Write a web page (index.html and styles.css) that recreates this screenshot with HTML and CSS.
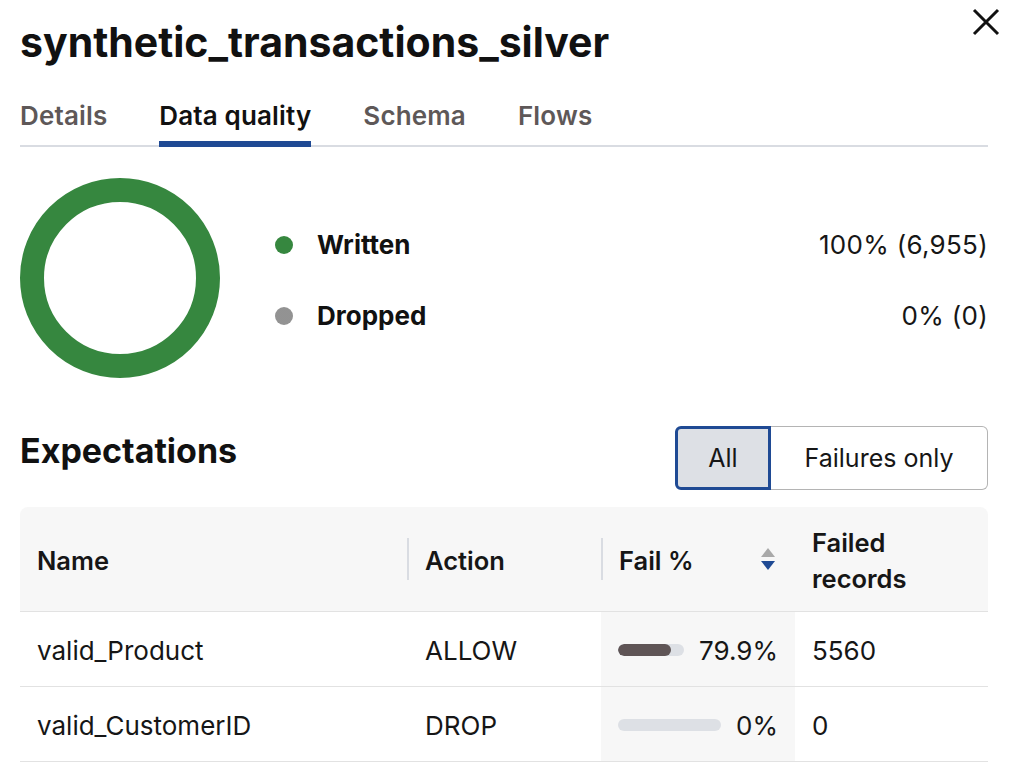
FILE: index.html
```html
<!DOCTYPE html>
<html lang="en">
<head>
<meta charset="utf-8">
<title>synthetic_transactions_silver</title>
<link rel="stylesheet" href="styles.css">
</head>
<body>
<div class="panel">
  <header class="panel-head">
    <h1 class="title">synthetic_transactions_silver</h1>
    <button class="close" aria-label="Close">
      <svg width="28" height="28" viewBox="0 0 28 28"><path d="M2 2 L26 26 M26 2 L2 26" stroke="#111" stroke-width="3" fill="none"/></svg>
    </button>
  </header>
  <nav class="tabs">
    <a class="tab">Details</a>
    <a class="tab active">Data quality</a>
    <a class="tab">Schema</a>
    <a class="tab">Flows</a>
  </nav>
  <section class="summary">
    <svg class="donut" width="200" height="200" viewBox="0 0 200 200">
      <circle cx="100" cy="100" r="88" fill="none" stroke="#36873f" stroke-width="24"/>
    </svg>
    <ul class="legend">
      <li class="legend-row"><span class="dot dot-written"></span><span class="legend-label">Written</span><span class="legend-value">100% (6,955)</span></li>
      <li class="legend-row"><span class="dot dot-dropped"></span><span class="legend-label">Dropped</span><span class="legend-value">0% (0)</span></li>
    </ul>
  </section>
  <section class="exp-head">
    <h2 class="exp-title">Expectations</h2>
    <div class="toggle">
      <button class="toggle-btn selected">All</button>
      <button class="toggle-btn">Failures only</button>
    </div>
  </section>
  <table class="exp-table">
    <colgroup><col class="c-name"><col class="c-action"><col class="c-fail"><col class="c-records"></colgroup>
    <thead>
      <tr>
        <th class="th-name">Name</th>
        <th class="th-div"><div class="th-inner">Action</div></th>
        <th class="th-div th-fail"><div class="th-inner"><span>Fail %</span>
          <svg class="sort" width="16" height="26" viewBox="0 0 16 26"><path d="M8 2 L15 11 L1 11 Z" fill="#a9a9a9"/><path d="M1 15 L15 15 L8 24 Z" fill="#1f4a94"/></svg></div></th>
        <th class="th-records">Failed<br>records</th>
      </tr>
    </thead>
    <tbody>
      <tr>
        <td>valid_Product</td>
        <td class="td-action">ALLOW</td>
        <td class="td-fail"><div class="fail"><div class="track"><div class="fill" style="width:79.9%"></div></div><span class="fail-val">79.9%</span></div></td>
        <td>5560</td>
      </tr>
      <tr>
        <td>valid_CustomerID</td>
        <td class="td-action">DROP</td>
        <td class="td-fail"><div class="fail"><div class="track"><div class="fill" style="width:0%"></div></div><span class="fail-val">0%</span></div></td>
        <td>0</td>
      </tr>
    </tbody>
  </table>
</div>
</body>
</html>
```
FILE: styles.css
```css
* { box-sizing: border-box; }
html, body { margin: 0; padding: 0; background: #fff; }
body {
  font-family: Inter, "Noto Sans", sans-serif;
  color: #161616;
  -webkit-font-smoothing: antialiased;
}
.panel { padding: 0 25px 0 20px; }
.panel-head {
  display: flex;
  justify-content: space-between;
  align-items: flex-start;
}
.title {
  margin: 19px 0 0;
  font-size: 41px;
  line-height: 46px;
  font-weight: 700;
  letter-spacing: 0;
  color: #111;
}
.close {
  margin: 8px -12px 0 0;
  padding: 0;
  border: 0;
  background: none;
  width: 28px;
  height: 28px;
}
.close svg { display: block; }
.tabs {
  display: flex;
  gap: 52px;
  margin-top: 35px;
  box-shadow: inset 0 -2px 0 #d9dce2;
}
.tab {
  font-size: 26px;
  line-height: 32px;
  font-weight: 600;
  letter-spacing: 0.15px;
  color: #5e5858;
  padding-bottom: 9px;
  border-bottom: 6px solid transparent;
}
.tab.active { color: #111; border-bottom-color: #1f4a94; }
.summary {
  display: flex;
  align-items: center;
  margin-top: 31px;
}
.donut { display: block; flex: none; }
.legend {
  list-style: none;
  margin: 4px 0 0 55px;
  padding: 0;
  flex: 1;
  display: flex;
  flex-direction: column;
  gap: 39px;
}
.legend-row {
  display: flex;
  align-items: center;
  height: 32px;
  font-size: 26px;
}
.dot {
  width: 18px;
  height: 18px;
  border-radius: 50%;
  flex: none;
  margin-right: 24px;
}
.dot-written { background: #36873f; }
.dot-dropped {
  background-color: #a3a3a3;
  background-image: radial-gradient(circle, #8a8a8a 0.6px, transparent 0.9px);
  background-size: 2px 2px;
}
.legend-label { font-weight: 700; color: #111; flex: 1; }
.legend-value { color: #161616; letter-spacing: 0.3px; }
.exp-head {
  display: flex;
  justify-content: space-between;
  align-items: flex-start;
  margin-top: 48px;
}
.exp-title {
  margin: 5px 0 0;
  font-size: 34px;
  line-height: 40px;
  font-weight: 700;
  color: #111;
}
.toggle { display: flex; height: 64px; }
.toggle-btn {
  font-family: inherit;
  font-size: 25px;
  color: #161616;
  background: #fff;
  border: 1px solid #b4b4b4;
  padding: 0 33px;
  margin: 0;
}
.toggle-btn:first-child { border-radius: 6px 0 0 6px; }
.toggle-btn:last-child { border-radius: 0 6px 6px 0; border-left: 0; width: 217px; padding: 0; }
.toggle-btn.selected {
  background: #dde0e5;
  border: 3px solid #1f4a94;
  width: 96px;
  padding: 0;
}
.exp-table {
  margin-top: 17px;
  width: 100%;
  border-collapse: separate;
  border-spacing: 0;
  table-layout: fixed;
  font-size: 26px;
}
.c-name { width: 387px; }
.c-action { width: 194px; }
.c-fail { width: 194px; }
.c-records { width: 193px; }
.exp-table th {
  background: #f7f7f7;
  height: 105px;
  text-align: left;
  font-size: 25.5px;
  font-weight: 600;
  color: #161616;
  line-height: 36px;
  padding: 3px 17px 0;
  border-bottom: 1px solid #e2e2e2;
}
.exp-table th:first-child { border-top-left-radius: 8px; }
.exp-table th:last-child { border-top-right-radius: 8px; }
.exp-table th.th-div { padding: 0 19px 0 0; }
.th-inner {
  display: flex;
  align-items: center;
  justify-content: space-between;
  height: 42px;
  border-left: 2px solid #d9dce2;
  padding: 3px 0 0 16px;
}
.sort { display: block; margin-top: -3px; }
.exp-table td {
  height: 75px;
  padding: 2px 17px 0;
  border-bottom: 1px solid #e2e2e2;
  color: #161616;
}
.td-action { padding-left: 18px !important; }
.exp-table td.td-fail { background: #f7f7f7; padding: 2px 17px 0; }
.fail { display: flex; align-items: center; gap: 15px; }
.track {
  flex: 1;
  height: 12px;
  border-radius: 6px;
  background: #dde0e5;
  overflow: hidden;
}
.fill { height: 100%; background: #5f5556; border-radius: 6px; }
.fail-val { flex: none; }
```
